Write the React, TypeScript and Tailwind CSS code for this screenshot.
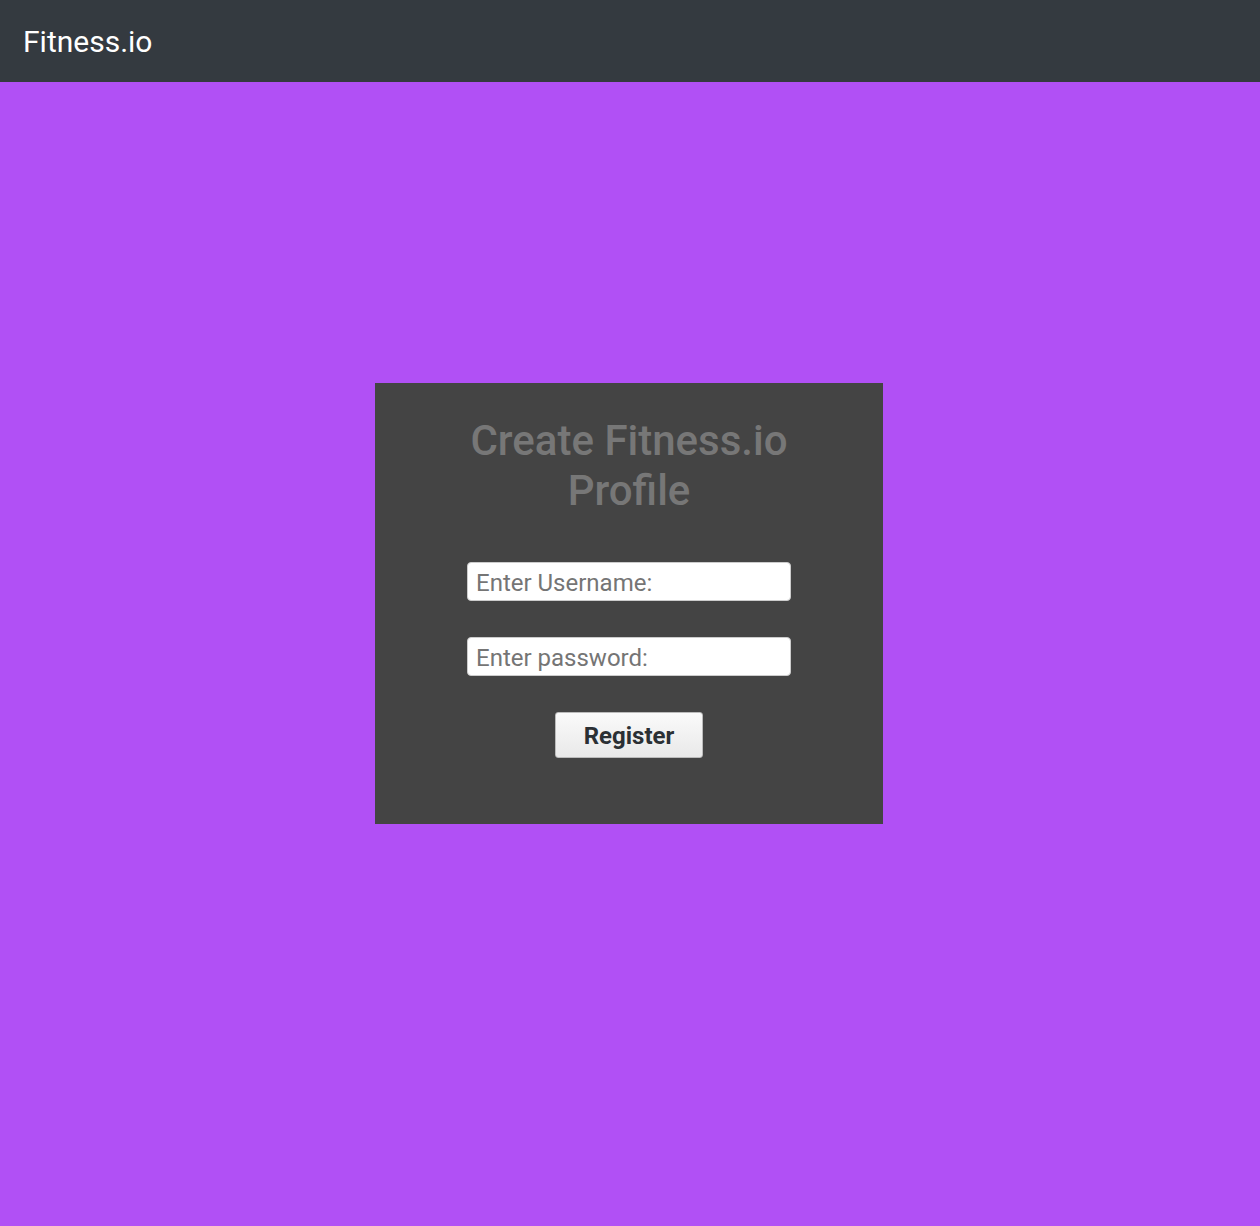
export default function App() {
    return (
        <div className="min-h-[1226px] bg-[#b150f5] font-['Roboto',sans-serif]">
            <nav className="h-[82px] bg-[#343a40] flex items-center px-[23px] pt-[2px]">
                <span className="text-white text-[30px] leading-none">Fitness.io</span>
            </nav>
            <div className="flex justify-center pt-[301px] pr-[2px]">
                <div className="w-[508px] h-[441px] bg-[#444444] flex flex-col items-center pt-[33px]">
                    <h1 className="text-[42px] leading-[50px] font-medium text-[#777777] text-center w-[350px]">
                        Create Fitness.io Profile
                    </h1>
                    <form className="flex flex-col items-center mt-[46px]">
                        <input
                            type="text"
                            placeholder="Enter Username:"
                            className="w-[324px] h-[39px] bg-white rounded-[4px] border border-[#cccccc] pl-[8px] pr-[9px] pt-[2px] text-[24px] text-[#333] placeholder:text-[#757575] outline-none"
                        />
                        <input
                            type="password"
                            placeholder="Enter password:"
                            className="w-[324px] h-[39px] bg-white rounded-[4px] border border-[#cccccc] pl-[8px] pr-[9px] pt-[2px] text-[24px] text-[#333] placeholder:text-[#757575] outline-none mt-[36px]"
                        />
                        <button
                            type="button"
                            className="mt-[36px] w-[148px] h-[46px] rounded-[3px] border border-[#bbbbbb] bg-gradient-to-b from-[#fafafa] to-[#e9e9e9] pt-[2px] text-[24px] font-bold text-[#2b3034]"
                        >
                            Register
                        </button>
                    </form>
                </div>
            </div>
        </div>
    )
}
